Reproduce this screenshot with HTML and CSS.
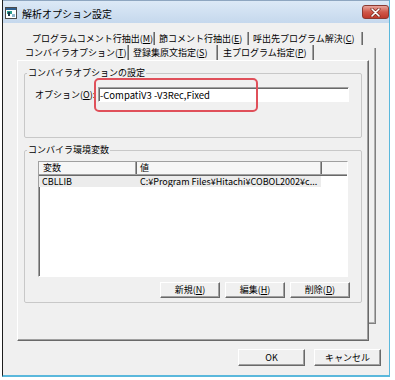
FILE: index.html
```html
<!DOCTYPE html>
<html>
<head>
    <title>解析オプション設定</title>
    <link rel="stylesheet" href="styles.css">
</head>
<body>
    <div class="window">
        <div class="titlebar">
            <svg class="app-icon" width="12" height="12" viewBox="0 0 12 12">
                <rect x="0.5" y="0.5" width="11" height="11" fill="#ffffff" stroke="#4a4a4a"/>
                <rect x="1" y="1" width="10" height="2" fill="#2f5f8f"/>
                <rect x="2" y="4" width="5" height="3" fill="#2a9d8f"/>
                <rect x="3" y="5" width="2" height="4" fill="#1d3b4f"/>
                <rect x="7" y="7" width="3" height="3" fill="#8fb8d0"/>
            </svg>
            <span class="title">解析オプション設定</span>
            <div class="close-btn">
                <svg width="11" height="9" viewBox="0 0 11 9">
                    <path d="M2 1 L9 8 M9 1 L2 8" stroke="#7a2a22" stroke-width="3" stroke-linecap="round"/>
                    <path d="M2 1 L9 8 M9 1 L2 8" stroke="#ffffff" stroke-width="1.6" stroke-linecap="round"/>
                </svg>
            </div>
        </div>

        <div class="client">
            <div class="sheets">
                <div class="back"></div>

                <div class="tabs tabs-back">
                    <div class="tab tab-m">プログラムコメント行抽出(<u>M</u>)</div>
                    <div class="tab tab-e">節コメント行抽出(<u>E</u>)</div>
                    <div class="tab tab-c">呼出先プログラム解決(<u>C</u>)</div>
                </div>

                <div class="front">
                    <div class="tabs">
                        <div class="tab tab-t">コンバイラオプション(<u>T</u>)</div>
                        <div class="tab tab-s">登録集原文指定(<u>S</u>)</div>
                        <div class="tab tab-p">主プログラム指定(<u>P</u>)</div>
                    </div>

                    <div class="panel">
                        <fieldset class="group group-opt">
                            <legend>コンバイラオプションの設定</legend>
                            <div class="opt-row">
                                <label for="option">オプション(<u>O</u>):</label>
                                <input type="text" id="option" value="-CompatiV3 -V3Rec,Fixed">
                                <div class="callout"></div>
                            </div>
                        </fieldset>

                        <fieldset class="group group-env">
                            <legend>コンバイラ環境変数</legend>
                            <div class="listview">
                                <div class="lv-head">
                                    <div class="lv-cell">変数</div>
                                    <div class="lv-cell">値</div>
                                    <div class="lv-cell lv-fill"></div>
                                </div>
                                <div class="lv-row">
                                    <div class="lv-cell">CBLLIB</div>
                                    <div class="lv-cell">C:¥Program Files¥Hitachi¥COBOL2002¥c...</div>
                                </div>
                            </div>
                            <div class="env-buttons">
                                <button type="button">新規(<u>N</u>)</button>
                                <button type="button">編集(<u>H</u>)</button>
                                <button type="button">削除(<u>D</u>)</button>
                            </div>
                        </fieldset>
                    </div>
                </div>
            </div>

            <div class="footer">
                <button type="button" class="dlg-btn">OK</button>
                <button type="button" class="dlg-btn">キャンセル</button>
            </div>
        </div>
    </div>
</body>
</html>
```

FILE: styles.css
```css
body {
    margin: 0;
    background-color: #ffffff;
    font-family: "Noto Sans CJK JP", "Noto Sans", sans-serif;
    font-size: 9px;
    color: #000000;
}

u {
    text-decoration: underline;
    text-underline-offset: 1px;
}

.window {
    box-sizing: border-box;
    width: 388px;
    height: 377px;
    margin-left: 2px;
    border-left: 1px solid #1e1e1e;
    border-right: 1px solid #5ab8dc;
    border-bottom: 2px solid #5ab8dc;
    display: flex;
    flex-direction: column;
}

.titlebar {
    height: 23px;
    box-sizing: border-box;
    border-top: 1px solid #8ea6c0;
    background: linear-gradient(#dce9f6, #c5d8ed);
    display: flex;
    align-items: center;
    padding-top: 2px;
}

.app-icon {
    margin-left: 2px;
}

.title {
    margin-left: 5px;
    font-size: 10px;
    flex: 1;
}

.close-btn {
    align-self: flex-start;
    margin-top: 2px;
    width: 27px;
    height: 14px;
    box-sizing: border-box;
    border: 1px solid #8a3a32;
    border-radius: 3px;
    background: linear-gradient(#e8a59c, #d0584a 50%, #c0392b);
    display: flex;
    align-items: center;
    justify-content: center;
}

.client {
    flex: 1;
    background-color: #f0f0f0;
    padding: 7px 8px 0 14px;
}

.sheets {
    display: grid;
    grid-template-columns: 1fr;
    width: 360px;
}

.back,
.tabs-back,
.front {
    grid-row: 1;
    grid-column: 1;
}

.back {
    box-sizing: border-box;
    width: 359px;
    height: 276px;
    margin-top: 18px;
    border-right: 1px solid #808080;
    border-bottom: 1px solid #808080;
    box-shadow: inset -1px -1px 0 #b0b0b0;
}

.tabs {
    display: flex;
    height: 15px;
}

.tabs-back {
    align-self: start;
    margin-left: 11px;
}

.tab {
    box-sizing: border-box;
    line-height: 15px;
    padding-left: 4px;
    white-space: nowrap;
    border-right: 1px solid #a0a0a0;
    box-shadow: 1px 0 0 #696969;
    margin-right: 1px;
}

.tabs-back .tab {
    margin-top: 2px;
    line-height: 13px;
    height: 13px;
}

.tab-m { width: 126px; }
.tab-e { width: 93px; }
.tab-c { width: 113px; }
.tab-t { width: 111px; padding-left: 8px; }
.tab-s { width: 88px; }
.tab-p { width: 95px; padding-left: 5px; }

.front {
    margin-top: 15px;
    width: 352px;
}

.panel {
    box-sizing: border-box;
    height: 281px;
    background-color: #f0f0f0;
    border-left: 1px solid #ffffff;
    border-top: 1px solid #ffffff;
    border-right: 1px solid #696969;
    border-bottom: 1px solid #696969;
    box-shadow: inset -1px -1px 0 #a0a0a0;
    padding: 6px 0 0 6px;
}

.group {
    box-sizing: border-box;
    width: 338px;
    margin: 0;
    padding: 0;
    border: 1px solid #c8c8c8;
    border-radius: 2px;
}

.group legend {
    margin-left: 2px;
    padding: 0 1px;
    line-height: 12px;
}

.group-opt {
    height: 71px;
}

.group-env {
    height: 159px;
    margin-top: 6px;
}

.opt-row {
    position: relative;
    display: flex;
    align-items: center;
    margin-top: 8px;
    padding-left: 10px;
}

.opt-row label {
    width: 63px;
}

.opt-row input {
    box-sizing: border-box;
    width: 251px;
    height: 15px;
    margin: 0;
    padding: 0 1px;
    font-family: "Noto Sans CJK JP", "Noto Sans", sans-serif;
    font-size: 9.5px;
    background-color: #ffffff;
    border: 1px solid;
    border-color: #a0a0a0 #ffffff #ffffff #a0a0a0;
    box-shadow: inset 1px 1px 0 #696969;
    outline: none;
}

.callout {
    position: absolute;
    left: 69px;
    top: -9px;
    width: 164px;
    height: 34px;
    box-sizing: border-box;
    border: 2px solid #e0505a;
    border-radius: 5px;
}

.listview {
    box-sizing: border-box;
    width: 310px;
    height: 116px;
    margin: 5px 0 0 13px;
    background-color: #ffffff;
    border: 1px solid;
    border-color: #a0a0a0 #ffffff #ffffff #a0a0a0;
    box-shadow: inset 1px 1px 0 #696969;
}

.lv-head,
.lv-row {
    display: grid;
    grid-template-columns: 97px 185px 1fr;
}

.lv-head {
    height: 12px;
    line-height: 11px;
    background-color: #f6f6f6;
    border-bottom: 1px solid #a0a0a0;
    box-shadow: 0 1px 0 #696969;
}

.lv-head .lv-cell {
    border-right: 1px solid #a0a0a0;
    box-shadow: 1px 0 0 #696969;
    padding-left: 4px;
}

.lv-head .lv-fill {
    border-right: none;
    box-shadow: none;
}

.lv-row {
    margin-top: 1px;
    line-height: 11px;
}

.lv-row .lv-cell {
    background-color: #ececec;
    padding-left: 3px;
    white-space: nowrap;
    overflow: hidden;
}

.lv-row .lv-cell + .lv-cell {
    padding-left: 4px;
}

.env-buttons {
    display: flex;
    justify-content: flex-end;
    gap: 5px;
    margin-top: 5px;
    padding-right: 11px;
}

button {
    box-sizing: border-box;
    width: 60px;
    height: 16px;
    margin: 0;
    padding: 0;
    font-family: "Noto Sans CJK JP", "Noto Sans", sans-serif;
    font-size: 9px;
    line-height: 12px;
    color: #000000;
    background-color: #f0f0f0;
    border: 1px solid;
    border-color: #ffffff #696969 #696969 #ffffff;
    box-shadow: inset -1px -1px 0 #a0a0a0;
}

.footer {
    display: flex;
    justify-content: flex-end;
    gap: 9px;
    margin-top: 8px;
}

.dlg-btn {
    width: 67px;
    height: 17px;
}
```
